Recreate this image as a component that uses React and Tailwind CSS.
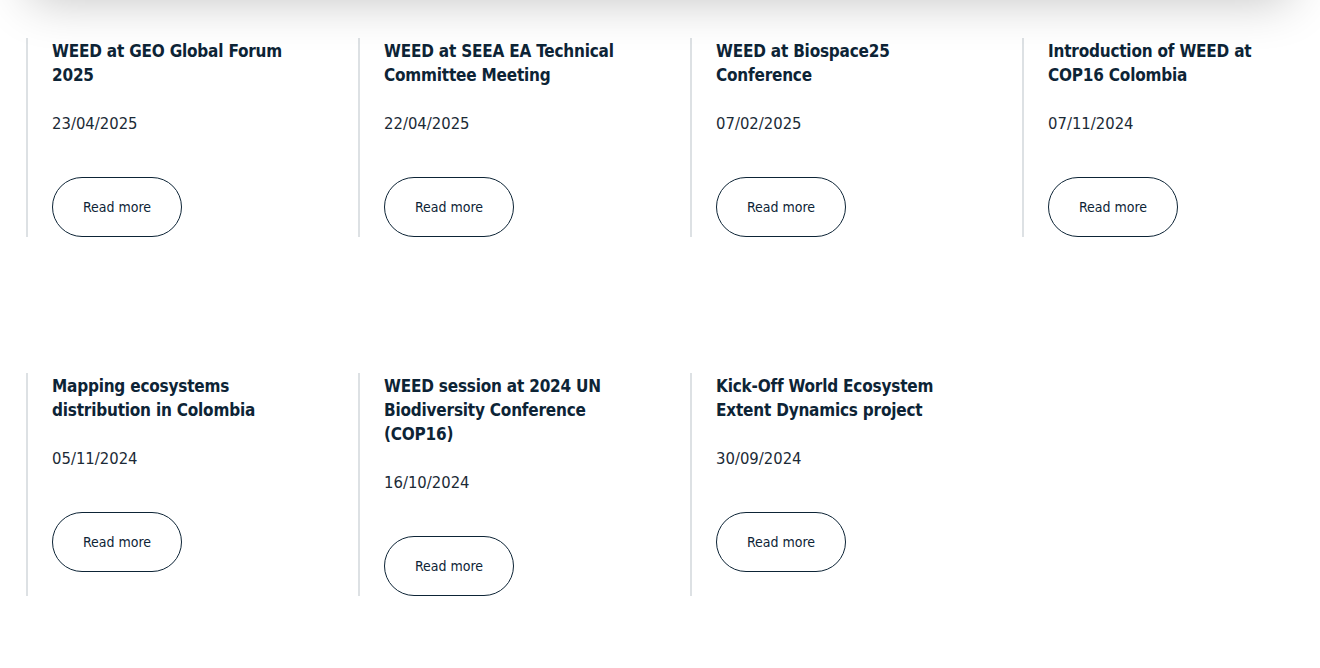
import React from "react";

const news = [
  { title: "WEED at GEO Global Forum 2025", date: "23/04/2025" },
  { title: "WEED at SEEA EA Technical Committee Meeting", date: "22/04/2025" },
  { title: "WEED at Biospace25 Conference", date: "07/02/2025" },
  { title: "Introduction of WEED at COP16 Colombia", date: "07/11/2024" },
  { title: "Mapping ecosystems distribution in Colombia", date: "05/11/2024" },
  { title: "WEED session at 2024 UN Biodiversity Conference (COP16)", date: "16/10/2024" },
  { title: "Kick-Off World Ecosystem Extent Dynamics project", date: "30/09/2024" },
];

function NewsCard({ title, date }) {
  return (
    <div className="border-l-2 border-[#dde1e4] pl-6 pt-px flex flex-col items-start">
      <h3 className="text-[17px] leading-6 font-bold tracking-[-0.2px] text-[#0d2436] max-w-[262px]">{title}</h3>
      <p className="mt-[25px] text-[16.5px] leading-6 text-[#1b2a36]">{date}</p>
      <a
        href="#"
        className="mt-[41px] w-[130px] h-[60px] rounded-full border border-[#0d2436] flex items-center justify-center text-[14px] text-[#0d2436]"
      >
        Read more
      </a>
    </div>
  );
}

export default function App() {
  return (
    <div
      className="relative min-h-[668px] bg-white overflow-hidden"
      style={{ fontFamily: '"DejaVu Sans Condensed", "DejaVu Sans", sans-serif' }}
    >
      <div className="absolute -top-[70px] left-[30px] right-[30px] h-[70px] bg-white shadow-[0_0_50px_rgba(0,0,0,0.24)]" />
      <div className="pt-[38px] pl-[26px] grid grid-cols-[repeat(4,290px)] gap-x-[42px] gap-y-[136px]">
        {news.map((n) => (
          <NewsCard key={n.title} {...n} />
        ))}
      </div>
    </div>
  );
}
